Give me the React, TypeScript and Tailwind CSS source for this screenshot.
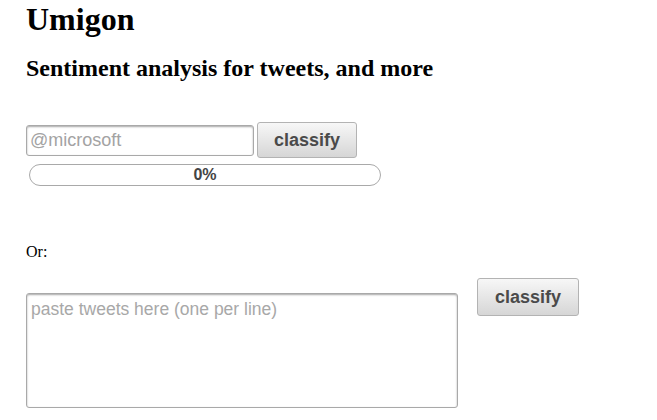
export default function App() {
  return (
    <div className="min-h-screen bg-white pl-[26px] font-['Liberation_Serif',serif] text-black">
      <h1 className="pt-[1px] text-[32px] leading-[36px] font-bold">Umigon</h1>
      <h2 className="mt-[17px] text-[24px] leading-[28px] font-bold">
        Sentiment analysis for tweets, and more
      </h2>

      <div className="mt-[40px] flex items-center gap-[3px]">
        <input
          className="h-[31px] w-[228px] rounded-[3px] border border-[#a9a9a9] px-[3px] font-['Liberation_Sans',sans-serif] text-[18px] text-[#555] shadow-[inset_0_1px_2px_rgba(0,0,0,0.35)] outline-none placeholder:text-[#a3a3a3]"
          placeholder="@microsoft"
        />
        <button className="h-[36px] w-[100px] rounded-[3px] border border-[#b3b3b3] bg-gradient-to-b from-[#f7f7f7] to-[#d6d6d6] font-['Liberation_Sans',sans-serif] text-[18px] font-bold text-[#4a4a4a]">
          classify
        </button>
      </div>

      <div className="mt-[6px] ml-[3px] flex h-[22px] w-[352px] items-center justify-center rounded-full border border-[#a9a9a9] font-['Liberation_Sans',sans-serif] text-[16px] font-bold text-[#444]">
        0%
      </div>

      <p className="mt-[57px] text-[16px] leading-[18px]">Or:</p>

      <div className="mt-[17px] flex items-start">
        <textarea
          className="mt-[15px] h-[115px] w-[432px] resize-none rounded-[3px] border border-[#a9a9a9] px-[4px] py-[2px] font-['Liberation_Sans',sans-serif] text-[17.5px] text-[#555] shadow-[inset_0_1px_2px_rgba(0,0,0,0.35)] outline-none placeholder:text-[#a8a8a8]"
          placeholder="paste tweets here (one per line)"
        />
        <button className="ml-[19px] h-[38px] w-[102px] rounded-[3px] border border-[#b3b3b3] bg-gradient-to-b from-[#f7f7f7] to-[#d6d6d6] font-['Liberation_Sans',sans-serif] text-[18px] font-bold text-[#4a4a4a]">
          classify
        </button>
      </div>
    </div>
  );
}
